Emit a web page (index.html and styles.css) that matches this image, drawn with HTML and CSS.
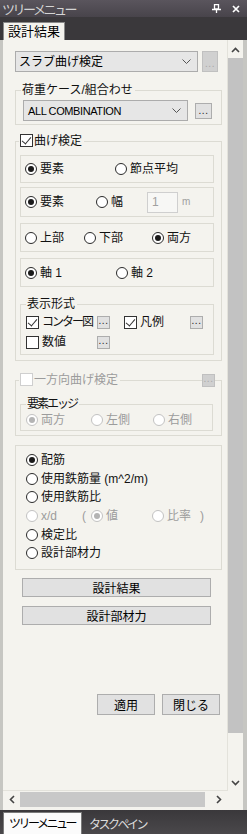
FILE: index.html
```html
<!DOCTYPE html>
<html lang="ja">
<head>
    <meta charset="UTF-8">
    <title>ツリーメニュー</title>
    <link rel="stylesheet" href="styles.css">
</head>
<body>
<div class="window">
    <div class="titlebar">
        <span class="title">ツリーメニュー</span>
        <span class="title-btns">
            <svg width="9" height="9" viewBox="0 0 9 9"><path d="M2.5 0.5h4v4.5h-4z M0 5.5h9 M4.5 5.5v3.5" fill="none" stroke="#fff" stroke-width="1.3"/></svg>
            <svg width="8" height="8" viewBox="0 0 8 8"><path d="M1 1l6 6M7 1l-6 6" stroke="#fff" stroke-width="1.7"/></svg>
        </span>
    </div>
    <div class="tabstrip"><div class="tab">設計結果</div></div>

    <div class="panel">
        <div class="panel-main">
            <div class="content">
                <div class="row top-row">
                    <div class="select main-select">スラブ曲げ検定<svg class="chev" width="9" height="5" viewBox="0 0 9 5"><path d="M0.5 0.5l4 4 4-4" fill="none" stroke="#555"/></svg></div>
                    <span class="dots big disabled">...</span>
                </div>

                <fieldset class="group load">
                    <legend>荷重ケース/組合わせ</legend>
                    <div class="row">
                        <div class="select combo"><span class="latin">ALL COMBINATION</span><svg class="chev" width="9" height="5" viewBox="0 0 9 5"><path d="M0.5 0.5l4 4 4-4" fill="none" stroke="#555"/></svg></div>
                        <span class="dots mid">...</span>
                    </div>
                </fieldset>

                <fieldset class="group bend">
                    <legend><span class="check on"></span>曲げ検定</legend>
                    <div class="box box-a">
                        <label class="opt w90"><span class="radio on"></span>要素</label>
                        <label class="opt"><span class="radio"></span>節点平均</label>
                    </div>
                    <div class="box box-b">
                        <label class="opt w71"><span class="radio on"></span>要素</label>
                        <label class="opt w51"><span class="radio"></span>幅</label>
                        <span class="num">1</span>
                        <span class="unit">m</span>
                    </div>
                    <div class="box box-c">
                        <label class="opt w59"><span class="radio"></span>上部</label>
                        <label class="opt w68"><span class="radio"></span>下部</label>
                        <label class="opt"><span class="radio on"></span>両方</label>
                    </div>
                    <div class="box box-d">
                        <label class="opt w91"><span class="radio on"></span>軸 1</label>
                        <label class="opt"><span class="radio"></span>軸 2</label>
                    </div>
                    <fieldset class="subgroup display">
                        <legend>表示形式</legend>
                        <div class="check-grid">
                            <label class="opt"><span class="check on"></span><span class="kana">コンター図</span></label>
                            <span class="dots small">...</span>
                            <span></span>
                            <label class="opt"><span class="check on"></span>凡例</label>
                            <span class="dots small">...</span>
                            <label class="opt"><span class="check"></span>数値</label>
                            <span class="dots small">...</span>
                        </div>
                    </fieldset>
                </fieldset>

                <div class="group-wrap">
                    <fieldset class="group oneway">
                        <legend class="dis-text"><span class="check disabled"></span>一方向曲げ検定</legend>
                        <fieldset class="subgroup edge">
                            <legend class="kana">要素エッジ</legend>
                            <div class="row dis-text">
                                <label class="opt w65"><span class="radio on disabled"></span>両方</label>
                                <label class="opt w62"><span class="radio disabled"></span>左側</label>
                                <label class="opt"><span class="radio disabled"></span>右側</label>
                            </div>
                        </fieldset>
                    </fieldset>
                    <span class="dots small disabled corner">...</span>
                </div>

                <div class="group result">
                    <label class="opt line"><span class="radio on"></span>配筋</label>
                    <label class="opt line"><span class="radio"></span>使用鉄筋量 (m^2/m)</label>
                    <label class="opt line"><span class="radio"></span>使用鉄筋比</label>
                    <div class="line xd dis-text">
                        <label class="opt w56"><span class="radio disabled"></span>x/d</label>
                        <span class="paren">(</span>
                        <label class="opt w61"><span class="radio on disabled"></span>値</label>
                        <label class="opt w48"><span class="radio disabled"></span>比率</label>
                        <span>)</span>
                    </div>
                    <label class="opt line"><span class="radio"></span>検定比</label>
                    <label class="opt line"><span class="radio"></span>設計部材力</label>
                </div>

                <button class="btn wide first">設計結果</button>
                <button class="btn wide">設計部材力</button>

                <div class="actions">
                    <button class="btn act">適用</button>
                    <button class="btn act">閉じる</button>
                </div>
            </div>

            <div class="vscroll">
                <div class="arrow"><svg width="9" height="6" viewBox="0 0 9 6"><path d="M1 5l3.5-3.5 3.5 3.5" fill="none" stroke="#444" stroke-width="1.6"/></svg></div>
                <div class="vthumb"></div>
                <div class="track"></div>
                <div class="arrow"><svg width="9" height="6" viewBox="0 0 9 6"><path d="M1 1l3.5 3.5 3.5-3.5" fill="none" stroke="#444" stroke-width="1.6"/></svg></div>
            </div>
        </div>
        <div class="hscroll">
            <div class="harrow"><svg width="6" height="9" viewBox="0 0 6 9"><path d="M5 1l-3.5 3.5 3.5 3.5" fill="none" stroke="#444" stroke-width="1.6"/></svg></div>
            <div class="hthumb"></div>
            <div class="harrow"><svg width="6" height="9" viewBox="0 0 6 9"><path d="M1 1l3.5 3.5-3.5 3.5" fill="none" stroke="#444" stroke-width="1.6"/></svg></div>
        </div>
    </div>

    <div class="bottombar">
        <div class="btab active">ツリーメニュー</div>
        <div class="btab">タスクペイン</div>
    </div>
</div>
</body>
</html>
```

FILE: styles.css
```css
body {
    margin: 0;
    background: #3d3b3e;
    font-family: "Liberation Sans", "Noto Sans CJK JP", sans-serif;
    font-size: 12px;
    line-height: 14px;
    color: #111;
}
.window {
    width: 247px;
    height: 834px;
    display: flex;
    flex-direction: column;
}

/* title + tabs */
.titlebar {
    height: 17px;
    flex: none;
    display: flex;
    align-items: center;
    justify-content: space-between;
    background: linear-gradient(#5a555d, #48444b);
}
.title {
    color: #d4d4d4;
    font-family: "Noto Sans CJK JP", sans-serif;
    font-size: 13px;
    letter-spacing: -2.5px;
    padding-left: 2px;
}
.title-btns {
    display: flex;
    align-items: center;
    gap: 11px;
    padding-right: 7px;
}
.tabstrip {
    height: 23px;
    flex: none;
    box-sizing: border-box;
    padding-left: 3px;
    display: flex;
    align-items: flex-end;
    background: #3a383b;
}
.tab {
    width: 62px;
    height: 18px;
    box-sizing: border-box;
    background: #f4f3ee;
    border: 1px solid #8a8a8a;
    border-bottom: 0;
    font-size: 13px;
    line-height: 17px;
    text-align: center;
    color: #000;
}

/* panel */
.panel {
    flex: 1;
    display: flex;
    flex-direction: column;
    background: #f4f3ee;
    border-left: 3px solid #c6c6c2;
    border-right: 4px solid #c6c6c2;
    padding-bottom: 3px;
}
.panel-main {
    flex: 1;
    display: flex;
    min-height: 0;
}
.content {
    width: 225px;
    box-sizing: border-box;
    padding: 11px 5px 0 12px;
    border-right: 1px solid #e3e2db;
    border-bottom: 1px solid #e3e2db;
    overflow: hidden;
}
.row {
    display: flex;
    align-items: center;
}
.kana {
    letter-spacing: -2px;
}

/* select + ... buttons */
.select {
    height: 21px;
    box-sizing: border-box;
    display: flex;
    align-items: center;
    justify-content: space-between;
    padding: 0 6px 0 3px;
    background: #e6e6e6;
    border: 1px solid #acacac;
    color: #000;
}
.main-select {
    width: 183px;
    font-size: 12px;
}
.combo {
    width: 165px;
    padding-left: 4px;
}
.latin {
    font-size: 11px;
    letter-spacing: -0.4px;
}
.dots {
    box-sizing: border-box;
    display: flex;
    align-items: flex-end;
    justify-content: center;
    background: #e1e1e1;
    border: 1px solid #adadad;
    font-size: 10px;
    line-height: 10px;
    letter-spacing: 0.5px;
    color: #222;
    padding-bottom: 2px;
}
.dots.big {
    width: 16px;
    height: 21px;
    margin-left: 4px;
}
.dots.mid {
    width: 17px;
    height: 16px;
    margin-left: 7px;
}
.dots.small {
    width: 13px;
    height: 13px;
}
.dots.disabled {
    background: #d0d0d0;
    border-color: #c0c0c0;
    color: #a8a8a8;
}

/* groups */
fieldset {
    margin: 0;
    min-width: 0;
    border: 1px solid #dcdbd3;
}
legend {
    padding: 0 2px 0 1px;
    line-height: 14px;
    white-space: nowrap;
}
.group.load {
    margin-top: 11px;
    padding: 3px 9px 3px 7px;
}
.group.load legend {
    margin-left: -2px;
}
.group.bend {
    margin-top: 9px;
    padding: 7px 7px 5px 4px;
}
.group.bend > legend {
    margin-left: -1px;
}
legend .check {
    margin-right: 1px;
    vertical-align: -2px;
}
.box {
    display: flex;
    align-items: center;
    border: 1px solid #dcdbd3;
    padding-left: 4px;
    box-sizing: border-box;
}
.box-a { height: 28px; }
.box-b { height: 30px; margin-top: 4px; }
.box-c { height: 29px; margin-top: 6px; }
.box-d { height: 29px; margin-top: 6px; }

.opt {
    display: flex;
    align-items: center;
    gap: 3px;
    white-space: nowrap;
}
.w48 { width: 48px; }
.w51 { width: 51px; }
.w56 { width: 56px; }
.w59 { width: 59px; }
.w61 { width: 61px; }
.w62 { width: 62px; }
.w65 { width: 65px; }
.w68 { width: 68px; }
.w71 { width: 71px; }
.w90 { width: 90px; }
.w91 { width: 91px; }

.num {
    width: 31px;
    height: 21px;
    box-sizing: border-box;
    border: 1px solid #cfcfcf;
    background: #f7f7f5;
    color: #a0a0a0;
    padding-left: 4px;
    line-height: 19px;
}
.unit {
    margin-left: 4px;
    font-size: 10px;
    color: #a0a0a0;
}

.subgroup {
    padding: 1px 6px 2px 5px;
}
.subgroup.display {
    margin-top: 10px;
}
.check-grid {
    display: grid;
    grid-template-columns: 71px 13px 14px 66px 13px;
    grid-auto-rows: 20px;
    align-items: center;
}

.group-wrap {
    position: relative;
    margin-top: 12px;
}
.group.oneway {
    padding: 10px 8px 4px 4px;
}
.group.oneway > legend {
    margin-left: -1px;
}
.corner {
    position: absolute;
    top: 1px;
    right: 7px;
}
.subgroup.edge {
    padding: 2px 6px 3px 5px;
}
.dis-text {
    color: #9c9c9c;
}

.group.result {
    margin-top: 9px;
    height: 125px;
    box-sizing: border-box;
    border: 1px solid #dcdbd3;
    padding: 5px 0 0 10px;
}
.line {
    height: 18.6px;
}
.xd {
    display: flex;
    align-items: center;
}
.paren {
    width: 9px;
}

/* radios and checks */
.radio {
    width: 12px;
    height: 12px;
    flex: none;
    box-sizing: border-box;
    border: 1px solid #2a2a2a;
    border-radius: 50%;
    background: #fff;
    position: relative;
}
.radio.on::after {
    content: "";
    position: absolute;
    left: 2px;
    top: 2px;
    width: 6px;
    height: 6px;
    border-radius: 50%;
    background: #1a1a1a;
}
.radio.disabled {
    border-color: #c2c2c2;
}
.radio.on.disabled::after {
    background: #b4b4b4;
}
.check {
    display: inline-block;
    width: 13px;
    height: 13px;
    flex: none;
    box-sizing: border-box;
    border: 1px solid #333;
    background: #fff;
    position: relative;
}
.check.on::after {
    content: "";
    position: absolute;
    left: 3px;
    top: 0px;
    width: 4px;
    height: 8px;
    border-right: 1px solid #333;
    border-bottom: 1px solid #333;
    transform: rotate(40deg);
}
.check.disabled {
    border-color: #cfcfcf;
}

/* buttons */
.btn {
    display: block;
    box-sizing: border-box;
    background: #e1e1e1;
    border: 1px solid #adadad;
    font-family: "Noto Sans CJK JP", sans-serif;
    font-size: 12px;
    line-height: 14px;
    padding: 0;
    color: #000;
}
.btn.wide {
    width: 189px;
    height: 19px;
    margin: 9px 0 0 7px;
}
.btn.wide.first {
    margin-top: 8px;
}
.actions {
    display: flex;
    justify-content: flex-end;
    gap: 7px;
    margin: 69px 2px 0 0;
}
.btn.act {
    width: 58px;
    height: 21px;
}

/* scrollbars */
.vscroll {
    width: 15px;
    display: flex;
    flex-direction: column;
    padding-top: 2px;
}
.arrow {
    height: 16px;
    flex: none;
    display: flex;
    align-items: center;
    justify-content: center;
}
.vthumb {
    height: 675px;
    flex: none;
    background: #c2c2c2;
}
.track {
    flex: 1;
}
.hscroll {
    height: 16px;
    width: 225px;
    flex: none;
    display: flex;
    align-items: center;
}
.harrow {
    width: 17px;
    height: 16px;
    display: flex;
    align-items: center;
    justify-content: center;
}
.hthumb {
    width: 185px;
    height: 15px;
    background: #c8c8c8;
}
.hscroll .harrow:last-child {
    margin-left: 5px;
}

/* bottom tabs */
.bottombar {
    height: 24px;
    flex: none;
    box-sizing: border-box;
    display: flex;
    align-items: flex-end;
    gap: 7px;
    padding-left: 3px;
    background: linear-gradient(#3a383b, #4a484b);
}
.btab {
    font-family: "Noto Sans CJK JP", sans-serif;
    font-size: 12px;
    line-height: 20px;
    letter-spacing: -2.5px;
    color: #dcdcdc;
    white-space: nowrap;
}
.btab.active {
    width: 79px;
    height: 22px;
    box-sizing: border-box;
    padding-left: 5px;
    background: #fbfbfb;
    border: 1px solid #7a7a7a;
    border-bottom: 0;
    color: #000;
}
```
